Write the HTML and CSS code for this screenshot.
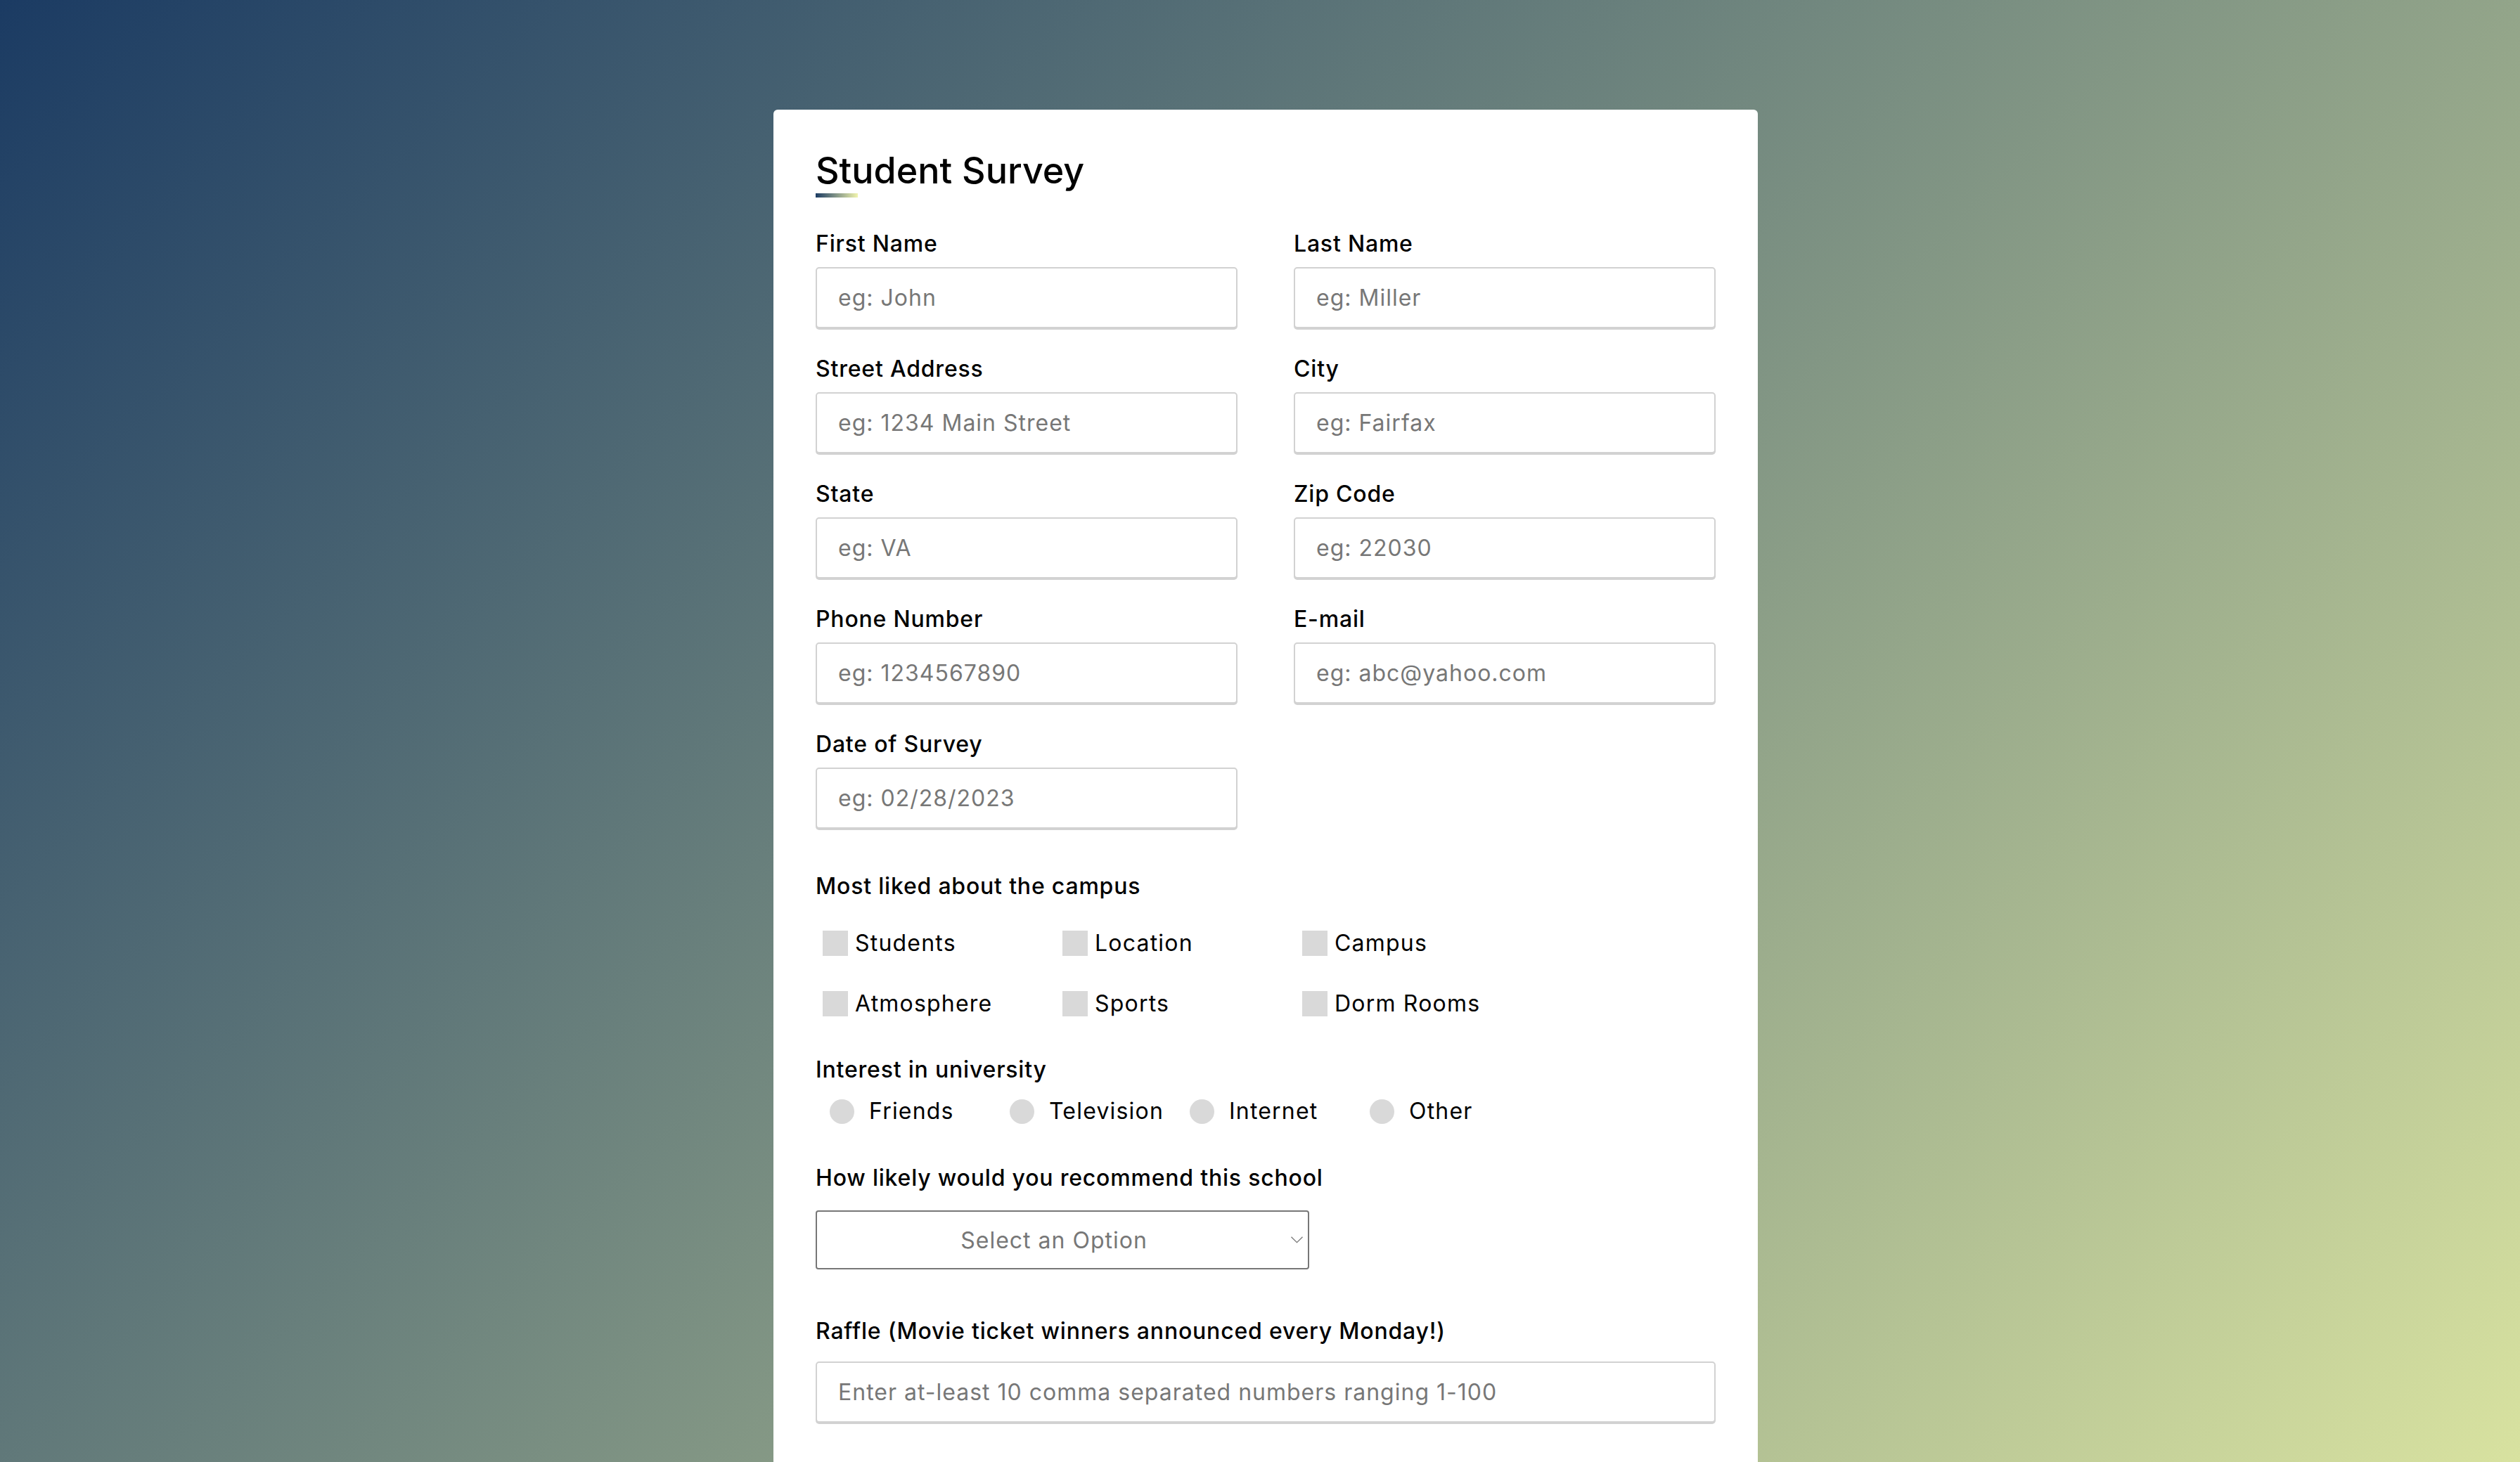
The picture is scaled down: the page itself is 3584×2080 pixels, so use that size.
FILE: index.html
```html
<!DOCTYPE html>
<html lang="en">
<head>
<meta charset="utf-8">
<title>Student Survey</title>
<link rel="stylesheet" href="styles.css">
</head>
<body>
<main class="page">
  <form class="card">
    <h1 class="title">Student Survey</h1>
    <div class="title-bar"></div>

    <div class="fields">
      <div class="field">
        <label class="label" for="fname">First Name</label>
        <input class="text-input" id="fname" type="text" placeholder="eg: John">
      </div>
      <div class="field">
        <label class="label" for="lname">Last Name</label>
        <input class="text-input" id="lname" type="text" placeholder="eg: Miller">
      </div>
      <div class="field">
        <label class="label" for="street">Street Address</label>
        <input class="text-input" id="street" type="text" placeholder="eg: 1234 Main Street">
      </div>
      <div class="field">
        <label class="label" for="city">City</label>
        <input class="text-input" id="city" type="text" placeholder="eg: Fairfax">
      </div>
      <div class="field">
        <label class="label" for="state">State</label>
        <input class="text-input" id="state" type="text" placeholder="eg: VA">
      </div>
      <div class="field">
        <label class="label" for="zip">Zip Code</label>
        <input class="text-input" id="zip" type="text" placeholder="eg: 22030">
      </div>
      <div class="field">
        <label class="label" for="phone">Phone Number</label>
        <input class="text-input" id="phone" type="text" placeholder="eg: 1234567890">
      </div>
      <div class="field">
        <label class="label" for="email">E-mail</label>
        <input class="text-input" id="email" type="text" placeholder="eg: abc@yahoo.com">
      </div>
      <div class="field">
        <label class="label" for="date">Date of Survey</label>
        <input class="text-input" id="date" type="text" placeholder="eg: 02/28/2023">
      </div>
    </div>

    <section class="group group-liked">
      <p class="label">Most liked about the campus</p>
      <div class="checks">
        <label class="option check"><input class="box" type="checkbox"><span>Students</span></label>
        <label class="option check"><input class="box" type="checkbox"><span>Location</span></label>
        <label class="option check"><input class="box" type="checkbox"><span>Campus</span></label>
        <label class="option check"><input class="box" type="checkbox"><span>Atmosphere</span></label>
        <label class="option check"><input class="box" type="checkbox"><span>Sports</span></label>
        <label class="option check"><input class="box" type="checkbox"><span>Dorm Rooms</span></label>
      </div>
    </section>

    <section class="group group-interest">
      <p class="label">Interest in university</p>
      <div class="radios">
        <label class="option radio"><input class="dot" type="radio" name="interest"><span>Friends</span></label>
        <label class="option radio"><input class="dot" type="radio" name="interest"><span>Television</span></label>
        <label class="option radio"><input class="dot" type="radio" name="interest"><span>Internet</span></label>
        <label class="option radio"><input class="dot" type="radio" name="interest"><span>Other</span></label>
      </div>
    </section>

    <section class="group group-recommend">
      <label class="label" for="recommend">How likely would you recommend this school</label>
      <div class="select-wrap">
        <select class="select" id="recommend">
          <option>Select an Option</option>
          <option>Very Likely</option>
          <option>Likely</option>
          <option>Unlikely</option>
        </select>
        <svg class="chevron" width="17" height="10" viewBox="0 0 17 10" aria-hidden="true">
          <path d="M0.5 0.8 L8.5 8.6 L16.5 0.8" fill="none" stroke="#777" stroke-width="1.3"/>
        </svg>
      </div>
    </section>

    <section class="group group-raffle">
      <label class="label" for="raffle">Raffle (Movie ticket winners announced every Monday!)</label>
      <input class="text-input raffle-input" id="raffle" type="text" placeholder="Enter at-least 10 comma separated numbers ranging 1-100">
    </section>
  </form>
</main>
</body>
</html>
```

FILE: styles.css
```css
html {
  min-height: 100%;
  background: linear-gradient(135deg, #1b3b63 0%, #d8e2a0 100%) fixed;
}

body {
  margin: 0;
  padding: 156px 0 0 16px;
  font-family: Inter, "Noto Sans", sans-serif;
  color: #000;
  letter-spacing: 1px;
}

.page {
  display: block;
}

.card {
  box-sizing: border-box;
  width: 1400px;
  margin: 0 auto;
  background: #fff;
  border-radius: 6px;
  padding: 56px 60px 80px;
}

.title {
  margin: 0;
  font-size: 52px;
  line-height: 62px;
  font-weight: 500;
  letter-spacing: 0;
}

.title-bar {
  width: 60px;
  height: 6px;
  margin-top: 1px;
  background: linear-gradient(90deg, #1b3b63, #f1f4ae);
}

.fields {
  display: grid;
  grid-template-columns: 600px 600px;
  column-gap: 80px;
  row-gap: 34px;
  margin-top: 42px;
}

.label {
  display: block;
  margin: 0;
  font-size: 32px;
  line-height: 48px;
  font-weight: 500;
  letter-spacing: 0.8px;
}

.field .label {
  margin-bottom: 9px;
}

.text-input {
  display: block;
  box-sizing: border-box;
  width: 100%;
  height: 87px;
  margin: 0;
  padding: 0 30px;
  border: 2px solid #d2d2d2;
  border-radius: 5px;
  box-shadow: 0 2px 0 #d2d2d2;
  background: #fff;
  font-family: inherit;
  font-size: 32px;
  letter-spacing: 1px;
  color: #000;
  outline: none;
}

.text-input::placeholder {
  color: #777;
}

.group-liked {
  margin-top: 58px;
}

.checks {
  display: grid;
  grid-template-columns: repeat(3, 341px);
  row-gap: 38px;
  margin-top: 33px;
  padding-left: 10px;
}

.option {
  display: flex;
  align-items: center;
  height: 48px;
  font-size: 32px;
  line-height: 48px;
  font-weight: 400;
  letter-spacing: 1.2px;
}

.check {
  gap: 10px;
}

.box {
  appearance: none;
  flex: none;
  width: 36px;
  height: 36px;
  margin: 0;
  border: 0;
  background: #d9d9d9;
}

.group-interest {
  margin-top: 46px;
}

.radios {
  display: grid;
  grid-template-columns: repeat(4, 256px);
  margin-top: 11px;
  padding-left: 20px;
}

.radio {
  gap: 21px;
}

.dot {
  appearance: none;
  flex: none;
  width: 35px;
  height: 35px;
  margin: 0;
  border: 0;
  border-radius: 50%;
  background: #d9d9d9;
}

.group-recommend {
  margin-top: 47px;
}

.select-wrap {
  position: relative;
  width: 702px;
  margin-top: 22px;
}

.select {
  display: block;
  box-sizing: border-box;
  width: 100%;
  height: 84px;
  margin: 0;
  padding: 0 24px 0 0;
  appearance: none;
  border: 2px solid #777;
  border-radius: 4px;
  background: #fff;
  font-family: inherit;
  font-size: 32px;
  letter-spacing: 1px;
  color: #777;
  text-align: center;
  text-align-last: center;
  outline: none;
}

.chevron {
  position: absolute;
  right: 9px;
  top: 37px;
  pointer-events: none;
}

.group-raffle {
  margin-top: 64px;
}

.raffle-input {
  margin-top: 19px;
}
```
